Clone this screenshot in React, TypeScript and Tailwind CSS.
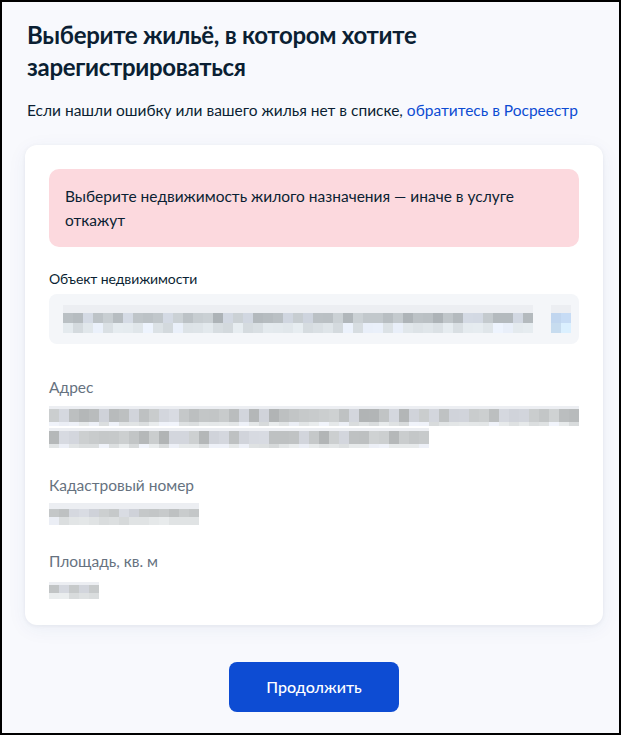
import type { CSSProperties, ReactNode } from 'react';

const font: CSSProperties = { fontFamily: 'Lato, "Noto Sans", sans-serif' };

// deterministic pseudo-random shades for the pixelated (redacted) values
function shades(seed: number, count: number, dark: boolean, tint = 0): string[] {
  const out: string[] = [];
  let s = seed;
  for (let i = 0; i < count; i++) {
    s = (s * 9301 + 49297) % 233280;
    const r = s / 233280;
    const base = dark ? 176 + Math.floor(r * 42) : 214 + Math.floor(r * 28);
    const blueish = r > 0.75 ? 10 : 4;
    out.push(`rgb(${base - tint}, ${base + 3}, ${base + blueish + tint})`);
  }
  return out;
}

interface MosaicProps {
  width: number;
  seed: number;
  cell?: number;
  pad?: number;
  main?: number;
  low?: number;
  tint?: number;
}

function Mosaic({ width, seed, cell = 10, pad = 3, main = 13, low = 4, tint = 0 }: MosaicProps) {
  const n = Math.floor(width / cell);
  const top = shades(seed, n, true, tint);
  const bottom = shades(seed + 7, n, false, tint);
  return (
    <div className="flex flex-col" style={{ width }}>
      <div className="flex" style={{ height: pad }}>
        {top.map((_, i) => (
          <div key={i} className="h-full bg-[#eceef2]" style={{ width: cell }} />
        ))}
      </div>
      <div className="flex" style={{ height: main }}>
        {top.map((c, i) => (
          <div key={i} className="h-full" style={{ width: cell, backgroundColor: c }} />
        ))}
      </div>
      <div className="flex" style={{ height: low }}>
        {bottom.map((c, i) => (
          <div key={i} className="h-full" style={{ width: cell, backgroundColor: c }} />
        ))}
      </div>
    </div>
  );
}

function Field({ label, children }: { label: string; children: ReactNode }) {
  return (
    <div className="flex flex-col">
      <p className="text-[15.5px] leading-6 text-[#66727f]">{label}</p>
      <div className="mt-[6px] flex flex-col">{children}</div>
    </div>
  );
}

function Line({ children }: { children: ReactNode }) {
  return <div className="h-[22px] flex items-center">{children}</div>;
}

export default function App() {
  return (
    <div
      className="w-[621px] h-[735px] border-2 border-black bg-[#f8f9fd] text-[#0b1f33] flex flex-col"
      style={font}
    >
      <div className="px-[25px] pt-[17px]">
        <h1 className="text-[24px] leading-8 font-bold tracking-[-0.3px]">
          Выберите жильё, в котором хотите
          <br />
          зарегистрироваться
        </h1>
        <p className="mt-[15px] text-[15.5px] leading-6">
          Если нашли ошибку или вашего жилья нет в списке,{' '}
          <span className="text-[#0d4cd3]">обратитесь в Росреестр</span>
        </p>
      </div>

      <div className="ml-[23px] mr-[16px] mt-[23px] rounded-xl bg-white p-6 shadow-[0_1px_4px_rgba(11,31,51,0.06),0_4px_20px_rgba(30,60,140,0.06)]">
        <div className="rounded-[10px] bg-[#fcd9de] px-4 py-[15px] text-[15.5px] leading-6">
          Выберите недвижимость жилого назначения — иначе в услуге
          <br />
          откажут
        </div>

        <p className="mt-[22px] text-[14px] leading-5 tracking-[-0.1px]">Объект недвижимости</p>
        <div className="mt-[5px] h-[50px] rounded-lg bg-[#f4f6f9] flex items-center pl-[14px] gap-[18px]">
          <Mosaic width={470} seed={3} pad={8} main={10} low={10} tint={3} />
          <Mosaic width={20} seed={41} pad={8} main={10} low={10} tint={18} />
        </div>

        <div className="mt-[31px] flex flex-col gap-[24px]">
          <Field label="Адрес">
            <Line>
              <Mosaic width={530} seed={11} />
            </Line>
            <Line>
              <Mosaic width={380} seed={23} />
            </Line>
          </Field>
          <Field label="Кадастровый номер">
            <Line>
              <Mosaic width={150} seed={57} pad={6} main={8} low={8} />
            </Line>
          </Field>
          <Field label="Площадь, кв. м">
            <Line>
              <Mosaic width={50} seed={5} pad={3} main={8} low={6} />
            </Line>
          </Field>
        </div>
      </div>

      <div className="flex justify-center mt-[37px] pl-[7px]">
        <button className="w-[170px] h-[50px] rounded-lg bg-[#0d4cd3] text-white text-[16px] font-medium">
          Продолжить
        </button>
      </div>
    </div>
  );
}
